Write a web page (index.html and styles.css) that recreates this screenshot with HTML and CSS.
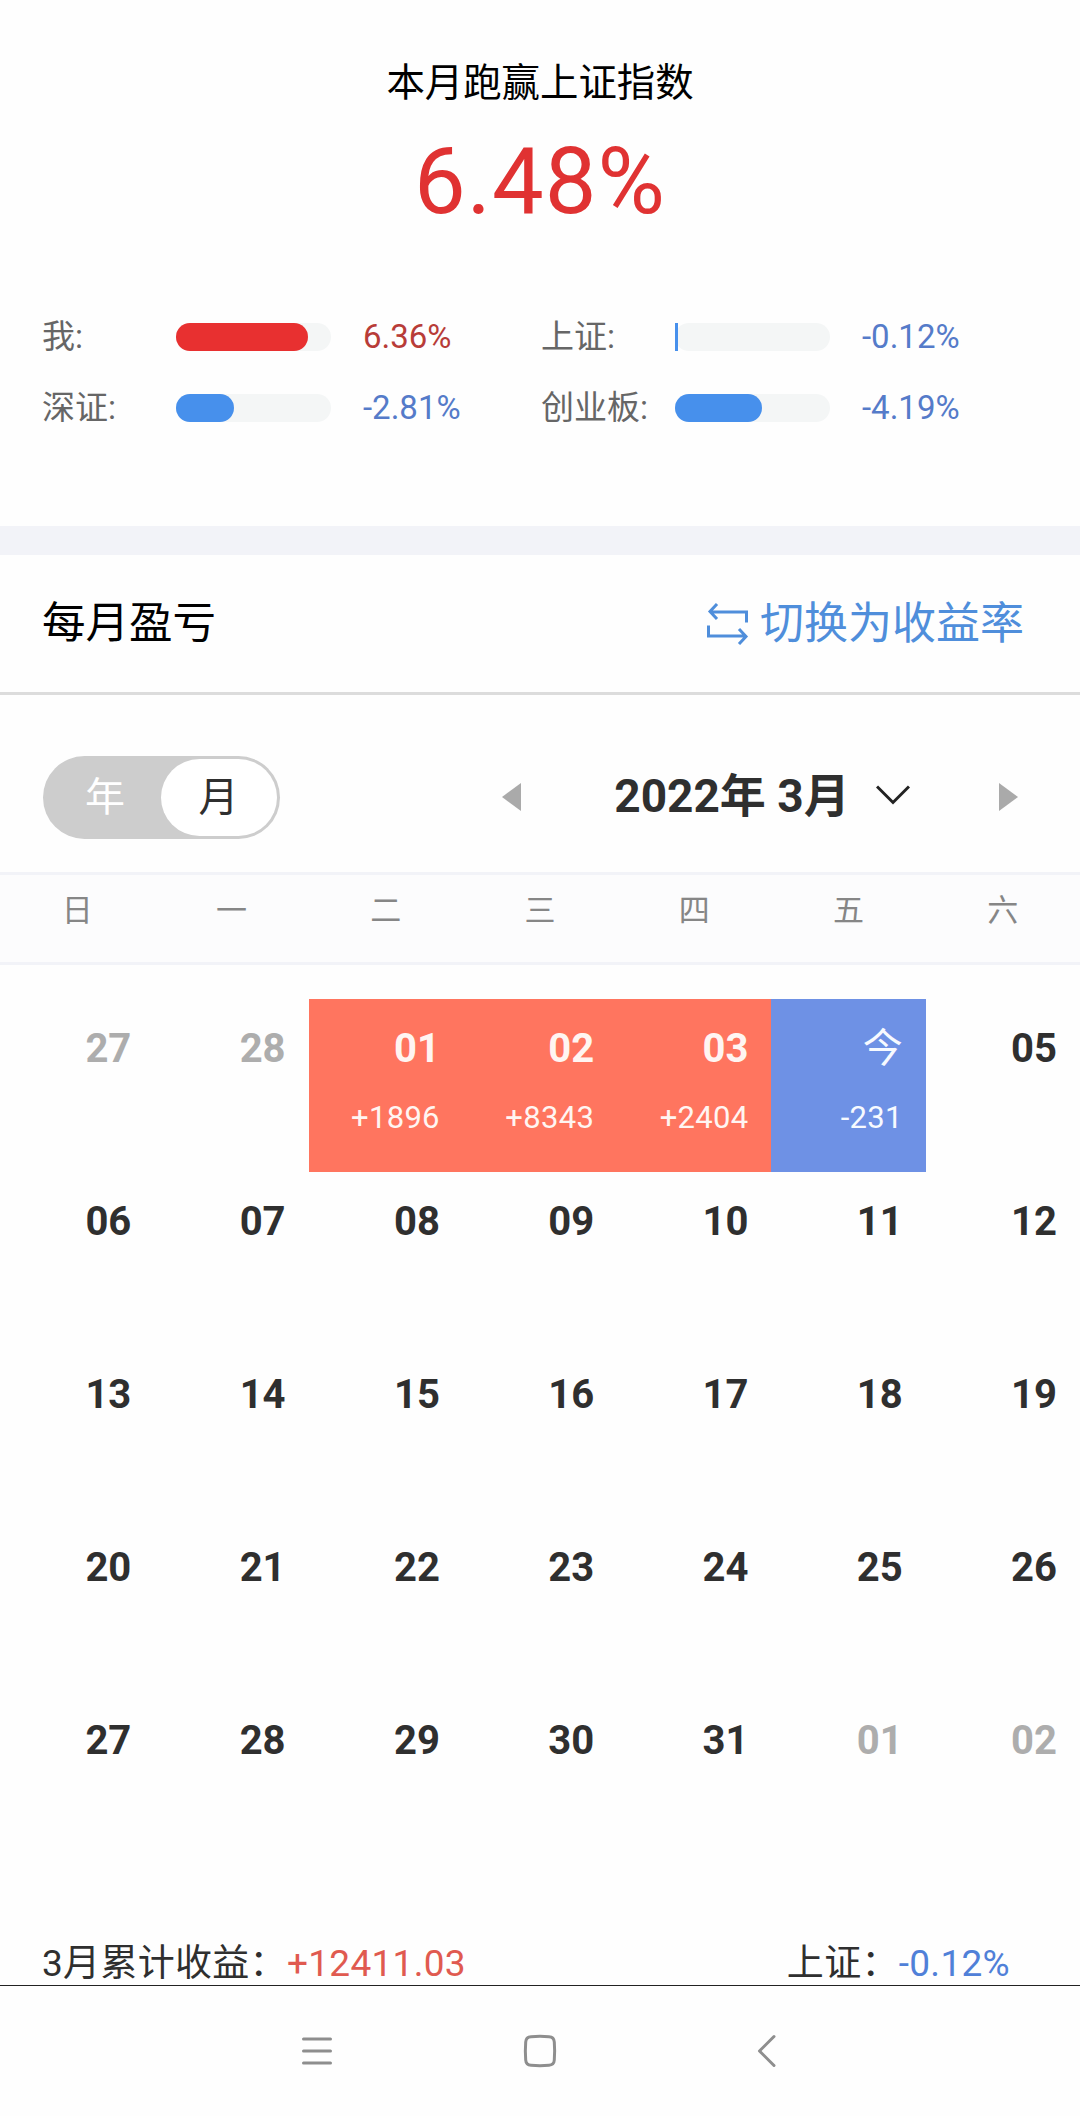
FILE: index.html
```html
<!DOCTYPE html>
<html lang="zh-CN">
<head>
    <meta charset="UTF-8">
    <meta name="viewport" content="width=device-width, initial-scale=1.0">
    <title>每月盈亏</title>
    <link rel="stylesheet" href="styles.css">
</head>
<body>
    <section class="summary">
        <h1>本月跑赢上证指数</h1>
        <div class="percent">6.48%</div>
        <div class="compare">
            <div class="item">
                <span class="label">我:</span>
                <div class="bar"><div class="fill red" style="width: 132px"></div></div>
                <span class="value up">6.36%</span>
            </div>
            <div class="item">
                <span class="label">上证:</span>
                <div class="bar"><div class="fill thin" style="width: 3px"></div></div>
                <span class="value">-0.12%</span>
            </div>
            <div class="item">
                <span class="label">深证:</span>
                <div class="bar"><div class="fill" style="width: 58px"></div></div>
                <span class="value">-2.81%</span>
            </div>
            <div class="item">
                <span class="label">创业板:</span>
                <div class="bar"><div class="fill" style="width: 87px"></div></div>
                <span class="value">-4.19%</span>
            </div>
        </div>
    </section>

    <section class="section-header">
        <h2>每月盈亏</h2>
        <a class="switch">
            <svg width="42" height="42" viewBox="0 0 42 42" fill="none" stroke="#4f8edb" stroke-width="3">
                <path d="M10 1 L3 8.5 L10 16 M3 9 H39.5 V19.5"/>
                <path d="M32 26 L39 33.5 L32 41 M39 33 H1.5 V22.5"/>
            </svg>
            <span>切换为收益率</span>
        </a>
    </section>

    <section class="controls">
        <div class="toggle">
            <span class="option">年</span>
            <span class="option active">月</span>
        </div>
        <div class="picker">
            <svg width="20" height="28" viewBox="0 0 20 28"><path d="M0 14 L19 0 V28 Z" fill="#aaa"/></svg>
            <div class="current">
                <span>2022年 3月</span>
                <svg width="34" height="20" viewBox="0 0 34 20" fill="none" stroke="#222" stroke-width="3"><path d="M1 1.5 L17 17.5 L33 1.5"/></svg>
            </div>
            <svg width="20" height="28" viewBox="0 0 20 28"><path d="M20 14 L1 0 V28 Z" fill="#aaa"/></svg>
        </div>
    </section>

    <div class="week">
        <span>日</span><span>一</span><span>二</span><span>三</span><span>四</span><span>五</span><span>六</span>
    </div>

    <div class="calendar">
        <div class="day other">27</div>
        <div class="day other">28</div>
        <div class="day gain">01<small>+1896</small></div>
        <div class="day gain">02<small>+8343</small></div>
        <div class="day gain">03<small>+2404</small></div>
        <div class="day loss"><span class="today">今</span><small>-231</small></div>
        <div class="day">05</div>
        <div class="day">06</div>
        <div class="day">07</div>
        <div class="day">08</div>
        <div class="day">09</div>
        <div class="day">10</div>
        <div class="day">11</div>
        <div class="day">12</div>
        <div class="day">13</div>
        <div class="day">14</div>
        <div class="day">15</div>
        <div class="day">16</div>
        <div class="day">17</div>
        <div class="day">18</div>
        <div class="day">19</div>
        <div class="day">20</div>
        <div class="day">21</div>
        <div class="day">22</div>
        <div class="day">23</div>
        <div class="day">24</div>
        <div class="day">25</div>
        <div class="day">26</div>
        <div class="day">27</div>
        <div class="day">28</div>
        <div class="day">29</div>
        <div class="day">30</div>
        <div class="day">31</div>
        <div class="day other">01</div>
        <div class="day other">02</div>
    </div>

    <div class="totals">
        <div>3月累计收益：<span class="total-up">+12411.03</span></div>
        <div>上证：<span class="total-down">-0.12%</span></div>
    </div>

    <nav class="navbar">
        <svg width="40" height="40" viewBox="0 0 40 40"><path d="M6.5 8 H33.5 M6.5 20 H33.5 M6.5 32 H33.5"/></svg>
        <svg width="40" height="40" viewBox="0 0 40 40"><path d="M11 5.7 Q20 5 29 5.7 Q34 6 34.3 11 Q35 20 34.3 29 Q34 34 29 34.3 Q20 35 11 34.3 Q6 34 5.7 29 Q5 20 5.7 11 Q6 6 11 5.7 Z"/></svg>
        <svg width="40" height="40" viewBox="0 0 40 40"><path d="M31 5.5 L16.5 20 L31 34.5"/></svg>
    </nav>
</body>
</html>
```

FILE: styles.css
```css
* {
    box-sizing: border-box;
}
body {
    margin: 0;
    width: 1080px;
    background-color: #fefefe;
    color: #2f2f2f;
    font-family: Roboto, "Noto Sans CJK SC", sans-serif;
}
h1, h2 {
    margin: 0;
    font-weight: 400;
    color: #000;
}
svg {
    display: block;
    flex-shrink: 0;
}
.summary {
    height: 526px;
    padding-top: 53px;
}
.summary h1 {
    font-size: 38.4px;
    line-height: 60px;
    text-align: center;
}
.percent {
    margin-top: 18px;
    font-size: 92px;
    line-height: 101px;
    letter-spacing: 1px;
    text-align: center;
    color: #e03232;
}
.compare {
    display: grid;
    grid-template-columns: 499px 499px;
    grid-auto-rows: 71px;
    margin-top: 69px;
    padding-left: 42px;
}
.item {
    display: flex;
    align-items: center;
    font-size: 33px;
    line-height: 40px;
}
.label {
    width: 134px;
    color: #666;
}
.bar {
    width: 155px;
    height: 28px;
    border-radius: 14px;
    background-color: #f4f6f6;
}
.fill {
    height: 28px;
    border-radius: 14px;
    background-color: #4790ec;
}
.fill.red {
    background-color: #e83030;
}
.fill.thin {
    border-radius: 0;
}
.value {
    margin-left: 32px;
    color: #557bc9;
}
.value.up {
    color: #b83c38;
}
.section-header {
    display: flex;
    justify-content: space-between;
    align-items: center;
    height: 169px;
    padding: 0 56px 0 42px;
    border-top: 29px solid #f2f3f8;
    border-bottom: 3px solid #dcdcdc;
}
.section-header h2 {
    font-size: 43.5px;
    line-height: 60px;
}
.switch {
    display: flex;
    align-items: center;
    gap: 11px;
    font-size: 44px;
    line-height: 60px;
    color: #4f8edb;
}
.controls {
    display: flex;
    align-items: center;
    height: 177px;
    padding: 27px 62px 0 43px;
}
.toggle {
    display: flex;
    width: 237px;
    height: 83px;
    padding: 3px;
    border-radius: 42px;
    background-color: #cdcdcd;
    font-size: 40px;
    line-height: 77px;
    text-align: center;
    color: #fff;
}
.option {
    width: 115px;
    padding-left: 3px;
}
.option.active {
    width: 116px;
    padding-right: 4px;
    border-radius: 39px;
    background-color: #fff;
    color: #2f2f2f;
}
.picker {
    flex: 1;
    display: flex;
    justify-content: space-between;
    align-items: center;
    margin-left: 222px;
}
.current {
    display: flex;
    align-items: center;
    gap: 26px;
    margin: 0 0 2px 4px;
    font-size: 46px;
    font-weight: 700;
    line-height: 60px;
}
.current svg {
    margin-bottom: 3px;
}
.week {
    display: grid;
    grid-template-columns: repeat(7, 1fr);
    height: 93px;
    border-top: 3px solid #f2f3f8;
    border-bottom: 3px solid #f2f3f8;
    background-color: #fcfcfd;
    font-size: 31px;
    line-height: 72px;
    text-align: center;
    color: #868686;
}
.calendar {
    display: grid;
    grid-template-columns: repeat(7, 1fr);
    grid-auto-rows: 173px;
    padding-top: 34px;
}
.day {
    padding: 20px 23px 0 0;
    font-size: 40px;
    font-weight: 700;
    line-height: 60px;
    text-align: right;
}
.day.other {
    color: #adadad;
}
.day.gain {
    background-color: #ff755f;
    color: #fff5f2;
}
.day.loss {
    background-color: #6e91e5;
    color: #f7faff;
}
.day small {
    display: block;
    margin-top: 20px;
    font-size: 31px;
    font-weight: 400;
    line-height: 38px;
    letter-spacing: 0.3px;
}
.today {
    font-weight: 400;
}
.totals {
    display: flex;
    justify-content: space-between;
    height: 121px;
    padding: 78px 70px 0 42px;
    font-size: 37px;
    line-height: 44px;
    letter-spacing: 0.3px;
}
.total-up {
    color: #e05a50;
}
.total-down {
    color: #5080d8;
}
.navbar {
    display: flex;
    justify-content: center;
    align-items: center;
    gap: 183px;
    height: 131px;
    border-top: 1px solid #222;
}
.navbar svg {
    fill: none;
    stroke: #8e8e8e;
    stroke-width: 3;
    stroke-linecap: round;
    stroke-linejoin: round;
}
```
